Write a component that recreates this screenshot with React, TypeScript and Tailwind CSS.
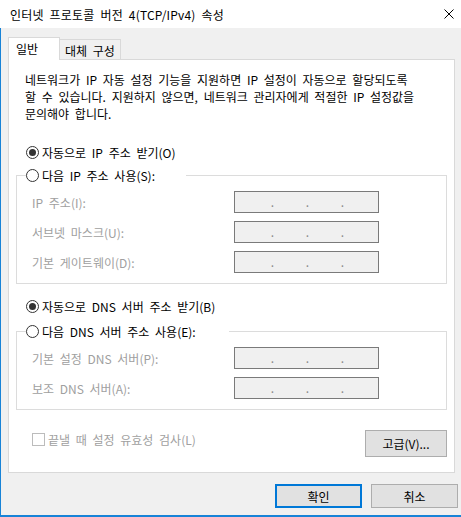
import React from 'react';

const font = { fontFamily: '"Noto Sans CJK KR", "Noto Sans", sans-serif' };

function Radio({ checked, label }: { checked?: boolean; label: string }) {
  return (
    <div className="flex h-[17px] items-center">
      <span className="flex h-[13px] w-[13px] items-center justify-center rounded-full border border-[#333333] bg-white">
        {checked && <span className="h-[7px] w-[7px] rounded-full bg-[#333333]" />}
      </span>
      <span className="ml-[3px] leading-[17px] text-black">{label}</span>
    </div>
  );
}

function IpField({ label }: { label: string }) {
  return (
    <div className="flex h-[22px] items-center">
      <span className="w-[217px] shrink-0 pl-[15px] leading-[17px] text-[#a0a0a0]">{label}</span>
      <div className="flex h-[22px] w-[145px] items-center border border-[#7a7a7a] bg-[#f0f0f0] pl-[20px] leading-[20px] text-[#8a8a8a]">
        <span className="w-[35px] text-center">.</span>
        <span className="w-[35px] text-center">.</span>
        <span className="w-[35px] text-center">.</span>
      </div>
    </div>
  );
}

function GroupBox({ legend, legendWidth, children }: { legend: string; legendWidth: string; children: React.ReactNode }) {
  return (
    <fieldset className="mx-[7px] border border-[#dcdcdc] px-0 pb-[10px] pt-[7px]">
      <legend className={`ml-[9px] ${legendWidth}`}>
        <Radio label={legend} />
      </legend>
      <div className="flex flex-col gap-[8px]">{children}</div>
    </fieldset>
  );
}

export default function App() {
  return (
    <div className="flex h-[517px] w-[461px] flex-col bg-[#f0f0f0] text-[12px] text-black [word-spacing:3px]" style={font}>
      {/* title bar */}
      <div className="flex h-[28px] items-center justify-between bg-white pl-[10px] pr-[7px]">
        <span className="leading-[17px] tracking-[0.2px]">인터넷 프로토콜 버전 4(TCP/IPv4) 속성</span>
        <svg width="10" height="10" viewBox="0 0 10 10" className="mb-[1px]">
          <path d="M0.5 0.5 L9.5 9.5 M9.5 0.5 L0.5 9.5" stroke="#000" strokeWidth="1" fill="none" />
        </svg>
      </div>

      <div className="flex flex-1 flex-col border-b-2 border-l border-[#1883d7] pl-[7px] pt-[9px]">
        {/* tabs */}
        <div className="flex h-[22px] items-end">
          <div className="relative z-10 mb-[-1px] flex h-[23px] w-[52px] items-center border border-b-0 border-[#d9d9d9] bg-white pl-[7px] pb-[1px]">
            일반
          </div>
          <div className="flex h-[20px] w-[61px] items-center justify-center border border-b-0 border-l-0 border-[#d9d9d9] bg-[#f0f0f0] pt-[2px]">
            대체 구성
          </div>
        </div>

        {/* panel */}
        <div className="flex h-[414px] w-[447px] flex-col border border-[#d9d9d9] bg-white">
          <p className="whitespace-nowrap pl-[16px] pt-[11px] leading-[17px]">
            네트워크가 IP 자동 설정 기능을 지원하면 IP 설정이 자동으로 할당되도록
            <br />
            할 수 있습니다. 지원하지 않으면, 네트워크 관리자에게 적절한 IP 설정값을
            <br />
            문의해야 합니다.
          </p>

          <div className="mt-[22px] pl-[17px]">
            <Radio checked label="자동으로 IP 주소 받기(O)" />
          </div>
          <div className="mt-[6px]">
            <GroupBox legend="다음 IP 주소 사용(S):" legendWidth="w-[160px]">
              <IpField label="IP 주소(I):" />
              <IpField label="서브넷 마스크(U):" />
              <IpField label="기본 게이트웨이(D):" />
            </GroupBox>
          </div>

          <div className="mt-[14px] pl-[17px]">
            <Radio checked label="자동으로 DNS 서버 주소 받기(B)" />
          </div>
          <div className="mt-[8px]">
            <GroupBox legend="다음 DNS 서버 주소 사용(E):" legendWidth="w-[203px]">
              <IpField label="기본 설정 DNS 서버(P):" />
              <IpField label="보조 DNS 서버(A):" />
            </GroupBox>
          </div>

          <div className="mt-[20px] flex items-start justify-between pl-[23px] pr-[7px]">
            <div className="mt-[1px] flex h-[17px] items-center">
              <span className="h-[13px] w-[13px] border border-[#bcbcbc] bg-white" />
              <span className="ml-[3px] leading-[17px] text-[#a0a0a0]">끝낼 때 설정 유효성 검사(L)</span>
            </div>
            <button type="button" className="h-[27px] w-[82px] border border-[#adadad] bg-[#e1e1e1] leading-[17px]">
              고급(V)...
            </button>
          </div>
        </div>

        {/* dialog buttons */}
        <div className="mt-[11px] flex justify-end gap-[9px] pr-[3px]">
          <button type="button" className="h-[24px] w-[87px] border-2 border-[#0078d7] bg-[#e1e1e1] leading-[17px]">
            확인
          </button>
          <button type="button" className="h-[24px] w-[87px] border border-[#adadad] bg-[#e1e1e1] leading-[17px]">
            취소
          </button>
        </div>
      </div>
    </div>
  );
}
